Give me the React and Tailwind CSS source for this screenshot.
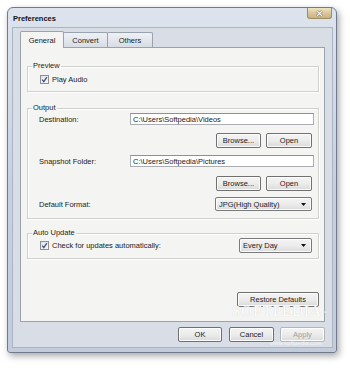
const Btn = ({ w, children, disabled }) => (
  <div
    className={`h-[15px] ${w} flex items-center justify-center rounded-[2px] border ${
      disabled ? "border-[#b2b6bb] text-[#a0a0a0]" : "border-[#707070] text-[#1b1b1b]"
    } bg-linear-to-b from-[#f4f4f4] via-[#ececec] to-[#dadada] shadow-[inset_0_0_0_1px_rgba(255,255,255,0.85)]`}
  >
    {children}
  </div>
);

const Check = () => (
  <svg width="9" height="9" viewBox="0 0 9 9" className="shrink-0">
    <defs>
      <linearGradient id="cbg" x1="0" y1="0" x2="1" y2="1">
        <stop offset="0" stopColor="#dfe2e6" />
        <stop offset="1" stopColor="#f8f9fa" />
      </linearGradient>
    </defs>
    <rect x="0.5" y="0.5" width="8" height="8" fill="url(#cbg)" stroke="#8e8f8f" />
    <path d="M2.2 4.6 L3.8 6.6 L6.9 2.1" fill="none" stroke="#3d5290" strokeWidth="1.3" />
  </svg>
);

const Arrow = () => (
  <svg width="5" height="3" viewBox="0 0 5 3" className="shrink-0">
    <polygon points="0,0 5,0 2.5,3" fill="#111" />
  </svg>
);

const Select = ({ w, children }) => (
  <div
    className={`h-[14px] ${w} flex items-center justify-between pl-[3px] pr-[5px] rounded-[2px] border border-[#7a7a7a] bg-linear-to-b from-[#f4f4f4] via-[#ececec] to-[#dcdcdc] shadow-[inset_0_0_0_1px_rgba(255,255,255,0.85)]`}
  >
    <span>{children}</span>
    <Arrow />
  </div>
);

const Input = ({ children }) => (
  <div className="h-[12px] w-[184px] flex items-center pl-[2px] bg-white border border-[#abadb3] border-t-[#8e9093]">
    {children}
  </div>
);

const Group = ({ title, className, children }) => (
  <fieldset className={`w-[292px] ml-[6px] border border-[#d0d0cc] shadow-[inset_1px_1px_0_#fff,1px_1px_0_#fff] ${className}`}>
    <legend className="ml-[4px] px-[1px] leading-[10px]">{title}</legend>
    {children}
  </fieldset>
);

export default function App() {
  return (
    <div className="w-[350px] h-[368px] bg-white pt-[7px] pl-[7px] overflow-hidden font-['Liberation_Sans',Arial,sans-serif] text-[7.5px] leading-[9px] text-[#1b1b1b]">
      <div className="relative w-[330px] h-[346px] rounded-t-[6px] rounded-b-[3px] border border-[#6f7b8c] bg-linear-to-b from-[#dde4ee] via-[#c7d1de] to-[#c2ccda] shadow-[2px_3px_7px_rgba(0,0,0,0.35)] flex flex-col">
        {/* title bar */}
        <div className="h-[20px] flex items-start justify-between pl-[5px] pr-[4px] shrink-0">
          <span className="font-bold mt-[6px] text-[#111]">Preferences</span>
          <div className="w-[25px] h-[11px] flex items-center justify-center rounded-b-[3px] border border-t-0 border-[#9d8b62] bg-linear-to-b from-[#f0e4c4] via-[#dcc79b] to-[#c9b283]">
            <svg width="7" height="7" viewBox="0 0 7 7">
              <path d="M1 1 L6 6 M6 1 L1 6" stroke="#6b6252" strokeWidth="2.4" />
              <path d="M1 1 L6 6 M6 1 L1 6" stroke="#ffffff" strokeWidth="1.2" />
            </svg>
          </div>
        </div>

        {/* client area */}
        <div className="ml-[5px] mr-[4px] mb-[5px] flex-1 bg-[#d9dee6] shadow-[0_0_0_1px_#aab4c2] flex flex-col pl-[7px] pr-[7px] pt-[3px] pb-[5px]">
          {/* tabs */}
          <div className="h-[16px] flex items-end relative z-10">
            <div className="w-[44px] h-[17px] -mb-px flex items-center justify-center bg-[#f4f4f2] border border-b-0 border-[#9aa2ae] rounded-t-[2px]">
              General
            </div>
            <div className="w-[45px] h-[15px] -ml-px flex items-center justify-center bg-linear-to-b from-[#eef0f4] to-[#d8dde5] border border-b-0 border-[#9aa2ae] rounded-t-[2px] text-[#222]">
              Convert
            </div>
            <div className="w-[46px] h-[15px] -ml-px flex items-center justify-center bg-linear-to-b from-[#eef0f4] to-[#d8dde5] border border-b-0 border-[#9aa2ae] rounded-t-[2px] text-[#222]">
              Others
            </div>
          </div>

          {/* panel */}
          <div className="relative w-[305px] h-[275px] bg-[#f4f4f2] border border-[#9aa2ae] pt-[13px] flex flex-col">
            <Group title="Preview" className="pb-[7px]">
              <div className="mt-[4px] pl-[12px] flex items-center gap-[3px]">
                <Check />
                <span>Play Audio</span>
              </div>
            </Group>

            <Group title="Output" className="mt-[11px] pb-[7px]">
              <div className="flex items-center pl-[11px]">
                <span className="w-[91px]">Destination:</span>
                <Input>C:\Users\Softpedia\Videos</Input>
              </div>
              <div className="mt-[8px] flex justify-end gap-[5px] pr-[6px]">
                <Btn w="w-[45px]">Browse...</Btn>
                <Btn w="w-[46px]">Open</Btn>
              </div>
              <div className="mt-[7px] flex items-center pl-[11px]">
                <span className="w-[91px]">Snapshot Folder:</span>
                <Input>C:\Users\Softpedia\Pictures</Input>
              </div>
              <div className="mt-[9px] flex justify-end gap-[5px] pr-[6px]">
                <Btn w="w-[45px]">Browse...</Btn>
                <Btn w="w-[46px]">Open</Btn>
              </div>
              <div className="mt-[6px] flex items-center pl-[11px] pr-[6px]">
                <span>Default Format:</span>
                <div className="ml-auto">
                  <Select w="w-[97px]">JPG(High Quality)</Select>
                </div>
              </div>
            </Group>

            <Group title="Auto Update" className="mt-[9px] pb-[5px]">
              <div className="flex items-center pl-[12px] pr-[6px]">
                <Check />
                <span className="ml-[3px]">Check for updates automatically:</span>
                <div className="ml-auto">
                  <div className="h-[15px] w-[73px] flex items-center justify-between pl-[3px] pr-[5px] rounded-[2px] border border-[#7a7a7a] bg-linear-to-b from-[#f4f4f4] via-[#ececec] to-[#dcdcdc] shadow-[inset_0_0_0_1px_rgba(255,255,255,0.85)]">
                    <span>Every Day</span>
                    <Arrow />
                  </div>
                </div>
              </div>
            </Group>

            <div className="mt-[33px] flex justify-end pr-[5px]">
              <Btn w="w-[82px]">Restore Defaults</Btn>
            </div>

            <div className="absolute left-[211px] top-[256px] text-[15px] leading-[15px] tracking-[1px] font-['Liberation_Serif',serif] text-white [text-shadow:0_0_1px_rgba(0,0,0,0.18)] pointer-events-none">
              SOFTPEDIA<sup className="text-[5px]">™</sup>
            </div>
          </div>

          {/* bottom buttons */}
          <div className="mt-[5px] flex justify-end">
            <Btn w="w-[44px]">OK</Btn>
            <div className="w-[7px]" />
            <Btn w="w-[45px]">Cancel</Btn>
            <div className="w-[6px]" />
            <Btn w="w-[45px]" disabled>
              Apply
            </Btn>
          </div>
          <div className="absolute left-[262px] top-[331px] text-[6px] text-white/70 pointer-events-none">
            www.softpedia.com
          </div>
        </div>
      </div>
    </div>
  );
}
